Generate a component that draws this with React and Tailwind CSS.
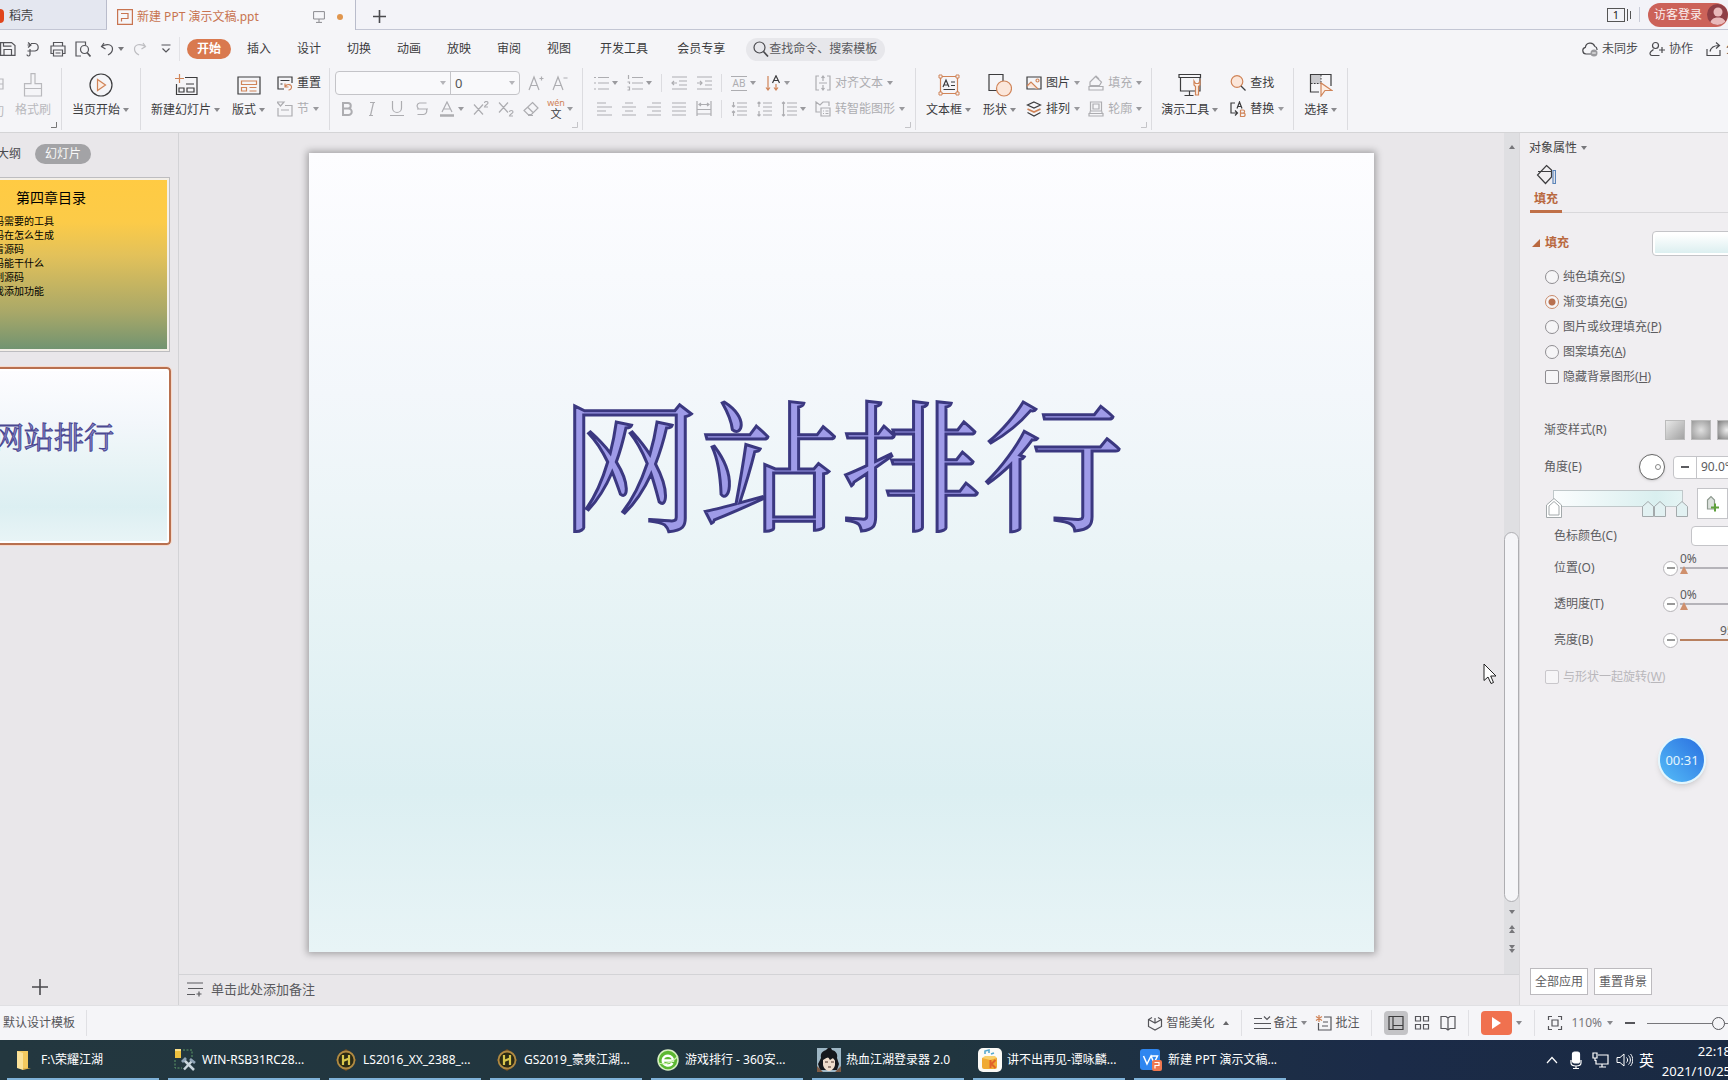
import React from "react";

const Svg = ({ w = 16, h = 16, className = "", children }) => (
  <svg
    width={w}
    height={h}
    viewBox={`0 0 ${w} ${h}`}
    fill="none"
    stroke="currentColor"
    strokeWidth="1.2"
    aria-hidden="true"
    className={`shrink-0 ${className}`}
  >
    {children}
  </svg>
);

const Caret = ({ className = "ml-[3px] text-[#8a8a8e]" }) => (
  <svg width="6" height="4" viewBox="0 0 6 4" aria-hidden="true" className={`shrink-0 ${className}`}>
    <path d="M0 0h6L3 4z" fill="currentColor" />
  </svg>
);

const OR = "#d08458";

const Sep = ({ className = "h-[18px] bg-[#dcdce0]" }) => <span className={`w-px shrink-0 ${className}`} />;

const Group = ({ className = "", launcher, dim, children }) => (
  <div className={`relative flex h-[62px] shrink-0 border-r border-[#dcdce0] pt-[2px] ${className}`}>
    {children}
    {launcher && (
      <Svg w={6} h={6} className={`absolute right-1 bottom-[2px] ${dim ? "text-[#c4c4c8]" : "text-[#777]"}`}>
        <path d="M5.5 0v5.5H0" strokeWidth="1" />
      </Svg>
    )}
  </div>
);

const Big = ({ label, caret, disabled, children }) => (
  <button
    type="button"
    disabled={disabled}
    className={`flex shrink-0 flex-col items-center pt-[3px] ${disabled ? "text-[#b9b9bd]" : "text-[#3c3c3e]"}`}
  >
    <span className="flex h-6 items-center">{children}</span>
    <span className="mt-[3px] flex items-center leading-5">
      {label}
      {caret && <Caret />}
    </span>
  </button>
);

const Tool = ({ label, name, caret, disabled, className = "", children }) => (
  <button
    type="button"
    aria-label={label ? undefined : name}
    disabled={disabled}
    className={`flex h-[26px] shrink-0 items-center whitespace-nowrap ${disabled ? "text-[#adadb1]" : "text-[#3c3c3e]"} ${className}`}
  >
    {children}
    {label && <span className="ml-1">{label}</span>}
    {caret && <Caret className={label ? "ml-1 text-[#9a9a9e]" : "ml-[3px] text-[#9a9a9e]"} />}
  </button>
);

const Lines = ({ d }) => (
  <Svg>
    <path d={d} />
  </Svg>
);

function TitleBar() {
  return (
    <header className="flex h-[30px] shrink-0 items-stretch border-b border-[#c3c6d4] bg-[#f3f3f8] text-[#444]">
      <button type="button" className="flex w-[107px] shrink-0 items-center gap-[5px] border-r border-[#b9bccb] bg-[#e4e7f0] pt-[3px]">
        <span className="h-[14px] w-1 rounded-r-full bg-[#e0451c]" />
        稻壳
      </button>
      <button type="button" className="-mb-px flex w-[249px] shrink-0 items-center border-r border-[#b9bccb] bg-[#f6f6f9] pl-[10px] pt-[3px] text-[#c87450]">
        <Svg w={16} h={16}>
          <path d="M.6 .6h14.800v14.800H.6zM4.500 12.500V9.500h6.500v-5H4" />
        </Svg>
        <span className="ml-1">新建 PPT 演示文稿.ppt</span>
        <Svg w={12} h={12} className="ml-auto text-[#8b8b90]">
          <path d="M.6 .6h10.800v7.400H.6zM6 8v3M3 11.400h6" strokeWidth="1" />
        </Svg>
        <span className="ml-3 mr-3 size-[6px] rounded-full bg-[#e0964e]" />
      </button>
      <button type="button" aria-label="新建标签" className="ml-[17px] flex items-center pt-[3px] text-[#4a4a4e]">
        <Svg w={13} h={13}>
          <path d="M6.500 0v13M0 6.500h13" strokeWidth="1.600" />
        </Svg>
      </button>
      <div className="ml-auto flex items-center">
        <span className="flex items-center gap-[2px]">
          <span className="flex h-[14px] w-[18px] items-center justify-center border border-[#555] text-[11px] leading-3 text-[#222]">1</span>
          <span className="h-3 w-px bg-[#555]" />
          <span className="h-2 w-px bg-[#555]" />
        </span>
        <Sep className="mx-2 h-[15px] bg-[#c9ccd8]" />
        <button type="button" className="flex h-6 items-center rounded-full bg-[#cc6259] pl-[6px] text-[#fbeeee]">
          访客登录
          <span className="ml-[5px] flex size-[21px] items-end justify-center overflow-hidden rounded-full bg-[#8f3f46]">
            <svg width="18" height="20" viewBox="0 0 18 20" aria-hidden="true" fill="#e9b9ba">
              <circle cx="9" cy="7" r="4.500" />
              <path d="M1 20c0-5 3-7.500 8-7.500s8 2.500 8 7.500z" />
            </svg>
          </span>
        </button>
      </div>
    </header>
  );
}

function MenuBar() {
  const tabs = ["插入", "设计", "切换", "动画", "放映", "审阅", "视图"];
  return (
    <nav className="flex h-[38px] shrink-0 items-center text-[#3c3c3e]">
      <div className="flex items-center gap-[9px] text-[#55555a]">
        <Svg w={16} h={16}>
          <path d="M.6 1.600h11l3.400 3v9.800H.6zM3.500 1.600v3.600h8M4 14V8.500h7.500V14" />
        </Svg>
        <Svg w={16} h={16}>
          <path d="M3 1.500 6 4 3 6.500M6 4H2.500M6 2.500h4a3.800 3.800 0 0 1 0 7.500H2.500M5 8v5.500a1.500 1.500 0 0 1-3 0" />
        </Svg>
        <Svg w={16} h={16}>
          <path d="M3.500 5V1.500h9V5M3.500 12.500H1V5h14v7.500h-2.500M3.500 9h9v6h-9zM5.500 12h5" />
        </Svg>
        <Svg w={16} h={16}>
          <path d="M6 15H1V1h9.500v3" />
          <circle cx="9.500" cy="8.500" r="4" />
          <path d="m12 11.500 3.500 4" strokeWidth="1.700" />
        </Svg>
        <span className="flex items-center">
          <Svg w={14} h={14}>
            <path d="M4 1 1.500 4.500 5.500 7M1.500 4.500C7 1 12.500 2.500 12.500 7c0 3-2.500 5-4.500 6" />
          </Svg>
          <Caret className="ml-1 text-[#77777b]" />
        </span>
        <Svg w={14} h={14} className="text-[#bdbdc1]">
          <path d="m10 1 2.500 3.500L8.500 7M12.500 4.500C7 1 1.500 2.500 1.500 7c0 3 2.500 5 4.500 6" />
        </Svg>
        <Svg w={12} h={10} className="ml-1">
          <path d="M1.500 1h9M2.500 4.500 6 8l3.500-3.500" />
        </Svg>
      </div>
      <Sep className="mx-[7px] h-6 bg-[#e2e2e6]" />
      <button type="button" className="h-5 w-11 shrink-0 rounded-full bg-[#d9794f] font-bold text-white">开始</button>
      <div className="ml-4 flex gap-[26px]">
        {tabs.map((t) => (
          <button type="button" key={t}>{t}</button>
        ))}
      </div>
      <button type="button" className="ml-[29px]">开发工具</button>
      <button type="button" className="ml-[29px]">会员专享</button>
      <label className="ml-[21px] flex h-[23px] w-[139px] items-center rounded-full bg-[#e7e7eb] pl-[7px]">
        <Svg w={16} h={16} className="text-[#4a4a4e]">
          <circle cx="6.500" cy="6.500" r="5.500" />
          <path d="m10.500 10.500 4.500 5" strokeWidth="1.700" />
        </Svg>
        <input
          aria-label="搜索"
          placeholder="查找命令、搜索模板"
          className="w-[112px] bg-transparent outline-none placeholder:text-[#5a5a5e] placeholder:opacity-100"
        />
      </label>
      <div className="ml-auto flex w-[146px] shrink-0 items-center overflow-hidden whitespace-nowrap text-[#4a4a4e]">
        <button type="button" className="flex shrink-0 items-center gap-1">
          <Svg w={16} h={16}>
            <path d="M9 13H4a3.400 3.400 0 0 1-.6-6.700 4.800 4.800 0 0 1 9.300-1A3.500 3.500 0 0 1 15 9" />
            <circle cx="12" cy="12" r="3.500" fill="#9a9a9e" stroke="none" />
            <path d="M10.200 12h3.600" stroke="#fff" strokeWidth="1" />
          </Svg>
          未同步
        </button>
        <button type="button" className="ml-[11px] flex shrink-0 items-center gap-1">
          <Svg w={16} h={16}>
            <circle cx="6.500" cy="4.500" r="3" />
            <path d="M4.500 8.500 2 10.500c-2 2-.5 4 1 4h7.500M13 6v6M10 9h6" />
          </Svg>
          协作
        </button>
        <button type="button" className="ml-[13px] flex shrink-0 items-center gap-1">
          <Svg w={16} h={16}>
            <path d="M1 8v6.500h13V9M4 10.500C5 6 8 4.500 13 4.500M10 1.500l3.500 3-3.500 3" />
          </Svg>
          分享
        </button>
      </div>
    </nav>
  );
}

function Ribbon() {
  return (
    <div className="flex h-[65px] shrink-0 items-start overflow-hidden border-b border-[#d4d4d6] whitespace-nowrap">
      <Group launcher className="w-[62px] text-[#b9b9bd]">
        <div className="flex w-[15px] flex-col justify-start gap-[14px] overflow-hidden pt-2">
          <Svg w={4} h={12}>
            <path d="M0 1h3v10H0M0 6h3" />
          </Svg>
          <span className="flex w-1 justify-end overflow-hidden leading-4">切</span>
        </div>
        <Big label="格式刷" disabled>
          <Svg w={20} h={24}>
            <path d="M8 .6h4v10h6.500V23H1.500V10.600H8zM1.500 15.500h17" />
          </Svg>
        </Big>
      </Group>
      <Group className="pl-[10px] pr-[11px]">
        <Big label="当页开始" caret>
          <Svg w={24} h={24}>
            <circle cx="12" cy="12" r="11" />
            <path d="M8.500 6.500v11l8-5.500z" stroke={OR} fill="#fdeee4" />
          </Svg>
        </Big>
      </Group>
      <Group className="gap-3 pl-[10px] pr-2">
        <Big label="新建幻灯片" caret>
          <Svg w={24} h={24}>
            <path d="M11 4.500h12v17H2.500V11M5 15h5v4H5zM13 15h7v4h-7zM12 11h8" />
            <path d="M5.500 1v9M1 5.500h9" stroke={OR} />
          </Svg>
        </Big>
        <Big label="版式" caret>
          <Svg w={24} h={24}>
            <path d="M1 4h22v17H1z" />
            <path d="M4.500 8h15v3.500h-15zM4.500 14.500h5v3.500h-5zM12.500 14.500h7M12.500 18h7" stroke={OR} />
          </Svg>
        </Big>
        <div>
          <Tool label="重置">
            <Svg>
              <path d="M7 14H1V2h14v6M3.500 5.500h9M3.500 9h2" />
              <path d="M8 8.500v3.500h3.500M8.500 11.500c1-3 6.500-2.500 6 1-.3 1.700-1.500 2.500-3 2.500" stroke={OR} />
            </Svg>
          </Tool>
          <Tool label="节" caret disabled>
            <Svg>
              <path d="M1 7v8h14V4.500H8M4 9h8M0 1h7L3.500 5z" />
            </Svg>
          </Tool>
        </div>
      </Group>
      <Group launcher dim className="pl-[5px] pr-[9px]">
        <div>
          <div className="flex h-[26px] items-center">
            <div className="flex h-6 overflow-hidden rounded border border-[#c4c4c8] bg-[#f9f9fb] text-[#555]">
              <div className="relative flex w-[115px] items-center border-r border-[#c4c4c8]">
                <select aria-label="字体" className="h-full w-full appearance-none bg-transparent px-1 outline-none">
                  <option> </option>
                </select>
                <Caret className="absolute right-1 text-[#b5b5b9]" />
              </div>
              <div className="relative flex w-[68px] items-center">
                <select aria-label="字号" className="h-full w-full appearance-none bg-transparent px-1 text-[13px] outline-none">
                  <option>0</option>
                </select>
                <Caret className="absolute right-1 text-[#b5b5b9]" />
              </div>
            </div>
            <Tool name="增大字号" disabled className="ml-2">
              <Lines d="M1 15 6 2l5 13M3 10.500h6M11.500 3.500h4M13.500 1.500v4" />
            </Tool>
            <Tool name="减小字号" disabled className="ml-2">
              <Lines d="M1 15 6 2l5 13M3 10.500h6M11.500 3h4" />
            </Tool>
          </div>
          <div className="flex h-[26px] items-center gap-[9px] pl-1">
            <Tool name="加粗" disabled>
              <Svg>
                <path d="M4 2v12h5.500a3.200 3.200 0 0 0 0-6.500H4h5a2.700 2.700 0 0 0 0-5.500z" strokeWidth="2" />
              </Svg>
            </Tool>
            <Tool name="倾斜" disabled>
              <Lines d="M6 1.500h5M5 14.500h4M9.500 1.500l-3 13" />
            </Tool>
            <Tool name="下划线" disabled>
              <Lines d="M3.500 0v7a4.500 4.500 0 0 0 9 0V0M1 14.500h14" />
            </Tool>
            <Tool name="删除线" disabled>
              <Lines d="M12.500 2H5.500a3 3 0 0 0-1 5.500M3 8h11M12.500 8.500c1 2-.5 5-3 5H3.500" />
            </Tool>
            <Tool name="字体颜色" disabled caret>
              <Svg>
                <path d="M3 11 8 1l5 10M5 8h6" />
                <path d="M1 14.500h14" strokeWidth="2.500" />
              </Svg>
            </Tool>
            <Tool name="上标" disabled>
              <Svg>
                <path d="M1 3.500l9 10M10 3.500l-9 10M11.500 2c0-2 3.500-2 3.500 0 0 1.500-3.500 2-3.500 4H15" />
              </Svg>
            </Tool>
            <Tool name="下标" disabled>
              <Svg>
                <path d="M1 1.500l9 10M10 1.500l-9 10M11.500 11c0-2 3.500-2 3.500 0 0 1.500-3.500 2-3.500 4H15" />
              </Svg>
            </Tool>
            <Tool name="清除格式" disabled>
              <Lines d="M9.500 1.500 15 7l-6.500 6.500H5L1 9.500zM4.500 6l6 6M5 14.500h5" />
            </Tool>
            <Tool name="拼音指南" caret>
              <span className="flex w-4 flex-col items-center">
                <span className="text-[9px] leading-[10px] text-[#d08458]">wén</span>
                <span className="text-[11px] leading-[12px]">文</span>
              </span>
            </Tool>
          </div>
        </div>
      </Group>
      <Group launcher dim className="pl-[10px] pr-[10px]">
        <div>
          <div className="flex h-[26px] items-center gap-[9px]">
            <Tool name="项目符号" disabled caret>
              <Lines d="M5 2.500h11M5 8h11M5 14h11M1 2.500h2M1 8h2M1 14h2" />
            </Tool>
            <Tool name="编号" disabled caret>
              <Lines d="M5 2.500h11M5 8h11M5 14h11M1.500 0v4M.5 7h2v2M.5 12h2v3h-2" />
            </Tool>
            <Sep />
            <Tool name="减少缩进" disabled>
              <Lines d="M1 2h15M8 6h8M8 10h8M1 14h15M6 8H1M3 6 1 8l2 2" />
            </Tool>
            <Tool name="增加缩进" disabled>
              <Lines d="M1 2h15M9 6h7M9 10h7M1 14h15M1 8h5M4 6l2 2-2 2" />
            </Tool>
            <Sep />
            <Tool name="字符间距" disabled caret>
              <span className="flex h-[15px] w-4 items-center justify-center border-y border-current text-[10px] leading-3">AB</span>
            </Tool>
            <Tool name="文字方向" caret>
              <Svg>
                <path d="M3 1v14M1 12.500 3 15l2-2.500M11 9v6M9 12.500l2 2.500 2-2.500" stroke={OR} />
                <path d="M7.500 8 11 .8 14.500 8M9 5.500h4" />
              </Svg>
            </Tool>
          </div>
          <div className="flex h-[26px] items-center gap-[9px] pl-[3px]">
            <Tool name="左对齐" disabled>
              <Lines d="M1 2h9M1 6h15M1 10h9M1 14h15" />
            </Tool>
            <Tool name="居中" disabled>
              <Lines d="M4 2h8M1 6h14M4 10h8M1 14h14" />
            </Tool>
            <Tool name="右对齐" disabled>
              <Lines d="M6 2h9M1 6h14M6 10h9M1 14h14" />
            </Tool>
            <Tool name="两端对齐" disabled>
              <Lines d="M1 2h14M1 6h14M1 10h14M1 14h14" />
            </Tool>
            <Tool name="分散对齐" disabled>
              <Lines d="M1 0v15M15 0v15M3 3.500h10M5 2 3 3.500 5 5M11 2l2 1.500L11 5M1 8.500h14M1 13h14" />
            </Tool>
            <Sep />
            <Tool name="段前间距" disabled>
              <Lines d="M6 2h10M6 6h10M6 10h10M6 14h10M2.500 1v5M1 4.500 2.500 6 4 4.500M2.500 10v5M1 11.500 2.500 10 4 11.500" />
            </Tool>
            <Tool name="段后间距" disabled>
              <Lines d="M7 2h9M7 6h9M7 10h9M7 14h9M3 1v5M1.500 2.500 3 1l1.500 1.500M3 10v5M1.500 13.500 3 15l1.500-1.500" />
            </Tool>
            <Tool name="行距" disabled caret>
              <Lines d="M6 2h10M6 6h10M6 10h10M6 14h10M2.500 1v14M1 2.500 2.500 1 4 2.500M1 13.500 2.500 15 4 13.500" />
            </Tool>
          </div>
        </div>
        <div className="ml-[9px]">
          <Tool label="对齐文本" disabled caret>
            <Lines d="M4 1H1v14h3M12 1h3v14h-3M4 8h8M8 1v5M6.500 3 8 1l1.500 2M8 10v5M6.500 13 8 15l1.500-2" />
          </Tool>
          <Tool label="转智能图形" disabled caret>
            <Lines d="M5 11H1V1l4 3 3-3h6v4M6 7h9v8H6zM8 10h1M10.500 10h3M8 12.500h1M10.500 12.500h3" />
          </Tool>
        </div>
      </Group>
      <Group launcher dim className="pl-[10px] pr-[9px]">
        <Big label="文本框" caret>
          <Svg w={22} h={22}>
            <path d="M2.500 2.500h17v17h-17z" stroke={OR} />
            <path d="M1 1h3v3H1zM18 1h3v3h-3zM1 18h3v3H1zM18 18h3v3h-3z" stroke={OR} fill="#f6f6f9" strokeWidth="1" />
            <path d="M5 13 8 6l3 7M6 11h4M13 8h4M13 11.500h4M5.500 15.500h11.500" />
          </Svg>
        </Big>
        <div className="ml-3">
          <Big label="形状" caret>
            <Svg w={24} h={24}>
              <path d="M1 1.500h14v16H1z" />
              <circle cx="16" cy="15.500" r="7.500" stroke={OR} fill="#fbe6da" />
            </Svg>
          </Big>
        </div>
        <div className="ml-[10px]">
          <Tool label="图片" caret>
            <Svg>
              <path d="M1 2h14v12H1z" />
              <path d="m1 11 4-4 7 7" stroke={OR} fill="#fbe6da" />
              <circle cx="11.500" cy="5.500" r="1.500" stroke={OR} />
            </Svg>
          </Tool>
          <Tool label="排列" caret>
            <Svg>
              <path d="m8 1 6.500 3L8 7 1.500 4z" />
              <path d="M1.500 8 8 11l6.500-3" stroke={OR} strokeWidth="1.800" />
              <path d="M1.500 11.500 8 15l6.500-3.500" />
            </Svg>
          </Tool>
        </div>
        <div className="ml-2">
          <Tool label="填充" caret disabled>
            <Lines d="M7.500 1.500 2 7v3.500h9.500L13.500 7zM5 4l3-3 3 3M1 11.500h14V15H1z" />
          </Tool>
          <Tool label="轮廓" caret disabled>
            <Lines d="M2.500 1h11v9h-11zM5 3h6v5H5zM1 12.500h14V15H1zM2 10.500v2M14 10.500v2" />
          </Tool>
        </div>
      </Group>
      <Group className="gap-3 pl-[9px] pr-[9px]">
        <Big label="演示工具" caret>
          <Svg w={24} h={24}>
            <path d="M1 1.500h21.500v3H1zM2.500 4.500V18h19.500V4.500M11.500 18v4.500M6.500 22.500h9" />
            <path d="M16 8v4l1.500 1.500V22h3v-8.500L22 12V8l-1.500 2.500h-3z" stroke={OR} fill="#fdeee4" />
          </Svg>
        </Big>
        <div>
          <Tool label="查找">
            <Svg>
              <circle cx="7" cy="6.500" r="5.800" stroke={OR} fill="#fbe6da" />
              <path d="m11 11 4.500 4.500" />
            </Svg>
          </Tool>
          <Tool label="替换" caret>
            <Svg>
              <path d="M5 2H1v10h6M5 9.500 7.500 12 5 14.500M7 7.500 9.500 1 12 7.500M8 5.500h3" />
              <path d="M10.500 9v6.500h3a1.500 1.500 0 0 0 0-3.300h-3M13 12.200a1.500 1.500 0 0 0 0-3.200h-2.500" stroke={OR} />
            </Svg>
          </Tool>
        </div>
      </Group>
      <Group className="px-[10px]">
        <Big label="选择" caret>
          <Svg w={24} h={24}>
            <path d="M2 2h10v9H2z" fill="#c9c9cd" stroke="none" />
            <path d="M10 19H1.500V1.500H22V13" />
            <path d="M2 10.500h9.500M12 2v8" strokeDasharray="1.500 1.500" strokeWidth="1" />
            <path d="M12 10v13l4-5.500h7z" stroke={OR} fill="#fdeee4" />
          </Svg>
        </Big>
      </Group>
    </div>
  );
}

const serifTitle = "font-['Noto_Serif_CJK_SC','Noto_Sans_CJK_SC',sans-serif] font-normal";
const slideBg = "bg-[linear-gradient(180deg,#fdfdff_0%,#f3f7fb_30%,#e9f4f6_52%,#dceff2_80%,#e8f4f6_100%)]";

function SlideList() {
  const items = ["码需要的工具", "码在怎么生成", "看源码", "码能干什么", "制源码", "戏添加功能"];
  return (
    <aside className="flex w-[179px] shrink-0 flex-col overflow-hidden border-r border-[#d3d3d6] whitespace-nowrap text-[#4a4a4e]">
      <div className="mt-[11px] flex h-5 items-center gap-[14px]">
        <button type="button" className="flex w-[21px] justify-end">大纲</button>
        <button type="button" className="h-5 w-14 rounded-full bg-[#a3a3a6] text-[#f8f8f8]">幻灯片</button>
      </div>
      <button
        type="button"
        className="mt-[13px] h-[175px] w-[170px] border border-l-0 border-[#bdbdc0] bg-[#f3efe8] py-[2px] pr-[2px] text-left text-black"
      >
        <span className="flex h-full flex-col bg-[linear-gradient(180deg,#ffcb43_0%,#fccb48_25%,#e2c15a_45%,#a9a868_78%,#729471_100%)] pt-2">
          <span className="pl-4 text-[14px] leading-[20px]">第四章目录</span>
          <span className="-ml-[6px] mt-[6px] flex flex-col text-[10px] leading-[14px]">
            {items.map((t) => (
              <span key={t}>{t}</span>
            ))}
          </span>
        </span>
      </button>
      <button
        type="button"
        className="mt-[15px] h-[178px] w-[171px] rounded-r border-2 border-l-0 border-[#b8704f] bg-white py-[2px] pr-[2px] outline outline-1 outline-[#f6d9cb]"
      >
        <span className={`flex h-full justify-start pt-[42px] ${slideBg}`}>
          <span className={`-ml-[6px] text-[30px] leading-[44px] text-[#8e8bd0] [-webkit-text-stroke:1px_#4b4890] ${serifTitle}`}>网站排行</span>
        </span>
      </button>
      <button type="button" aria-label="新建幻灯片" className="mt-auto mb-[10px] ml-8 w-4">
        <Svg>
          <path d="M8 0v16M0 8h16" strokeWidth="1.600" />
        </Svg>
      </button>
    </aside>
  );
}

function Scrollbar() {
  return (
    <div className="flex w-[15px] shrink-0 flex-col items-center bg-[#dfdfe2] pt-3 pb-[21px] text-[#77777b]">
      <Caret className="rotate-180" />
      <div className="mt-[13px] flex w-full flex-1 flex-col justify-end">
        <div className="h-1/2 rounded-full border border-[#aeaeb2] bg-[#f5f5f8]" />
      </div>
      <Caret className="mt-2" />
      <span className="mt-[11px] flex flex-col">
        <Caret className="rotate-180" />
        <Caret className="rotate-180" />
      </span>
      <span className="mt-3 flex flex-col">
        <Caret className="" />
        <Caret className="" />
      </span>
    </div>
  );
}

function Editor() {
  return (
    <main className="flex min-w-0 flex-1 flex-col">
      <div className="flex min-h-0 flex-1">
        <div className="flex min-w-0 flex-1 justify-center overflow-hidden pt-5 pb-[22px]">
          <section className={`flex aspect-[4/3] h-full justify-center pt-[206px] shadow-[0_0_7px_2px_rgba(0,0,0,0.3)] ${slideBg}`}>
            <h1 className={`text-[141px] leading-[200px] whitespace-nowrap text-[#9f9be8] [-webkit-text-stroke:3px_#3b3880] ${serifTitle}`}>
              网站排行
            </h1>
          </section>
        </div>
        <Scrollbar />
      </div>
      <div className="flex h-[31px] shrink-0 items-center border-t border-[#d3d3d6] pb-[2px] pl-2 text-[13px] text-[#5a5a5e]">
        <Svg className="mr-2">
          <path d="M0 2h16M1 7.500h15M0 13.500h8M12 10.500v5M9.500 13h5" />
        </Svg>
        单击此处添加备注
      </div>
    </main>
  );
}

const Option = ({ type, name, label, k, checked, disabled }) => (
  <label className={`flex h-[25px] items-center gap-1 ${disabled ? "text-[#b9b7bb]" : ""}`}>
    <input
      type={type}
      name={name}
      defaultChecked={checked}
      disabled={disabled}
      className={`size-[14px] shrink-0 appearance-none border bg-[#f6f5f7] checked:border-[#c98a6a] checked:bg-[radial-gradient(circle,#b8704f_0_3px,transparent_4px)] ${
        type === "radio" ? "rounded-full" : "rounded-[2px]"
      } ${disabled ? "border-[#c9c7cb]" : "border-[#8f8d91]"}`}
    />
    <span>
      {label}(<u>{k}</u>)
    </span>
  </label>
);

const Stop = ({ big, className = "" }) => (
  <svg width={big ? 16 : 12} height={big ? 20 : 16} viewBox={big ? "0 0 16 20" : "0 0 12 16"} aria-hidden="true" className={className} stroke="#a3a9ab">
    {big ? (
      <path d="M.5 7 8 .5 15.500 7v12.500H.5zM3 8l5-4.500L13 8v9H3z" fill="#fff" />
    ) : (
      <path d="M.5 5.500 6 .5l5.500 5v10H.5z" fill="#e2f1f2" />
    )}
  </svg>
);

const SliderRow = ({ label, value, text, filled }) => (
  <div className="flex h-9 items-center">
    <label htmlFor={label} className="w-[109px] shrink-0">{label}</label>
    <button type="button" aria-label="减少" className="flex size-[15px] shrink-0 items-center justify-center rounded-full border border-[#b5b3b7] bg-white text-[#555]">
      <Svg w={8} h={2}>
        <path d="M0 1h8" />
      </Svg>
    </button>
    <span className="relative ml-[2px] flex w-[106px] shrink-0 items-center">
      <span className={`absolute bottom-[9px] leading-4 ${filled ? "left-10" : "left-0"}`}>{text}</span>
      <input
        id={label}
        type="range"
        defaultValue={value}
        className={`h-4 w-full appearance-none bg-transparent [&::-webkit-slider-runnable-track]:h-[2px] [&::-webkit-slider-thumb]:-mt-px [&::-webkit-slider-thumb]:h-2 [&::-webkit-slider-thumb]:w-2 [&::-webkit-slider-thumb]:appearance-none [&::-webkit-slider-thumb]:bg-[#cf8f6c] [&::-webkit-slider-thumb]:[clip-path:polygon(50%_0,100%_100%,0_100%)] ${
          filled ? "[&::-webkit-slider-runnable-track]:bg-[#b8805f]" : "[&::-webkit-slider-runnable-track]:bg-[#b5b3b9]"
        }`}
      />
    </span>
  </div>
);

function Properties() {
  return (
    <aside className="flex w-[209px] shrink-0 flex-col overflow-hidden border-l border-[#d9d8db] bg-[#f0eef1] whitespace-nowrap text-[#5c5c60]">
      <div className="flex h-[30px] items-center pl-[9px] text-[#444]">
        对象属性
        <Caret className="ml-1 text-[#77777b]" />
      </div>
      <div className="mt-px ml-[10px] w-8">
        <button type="button" className="flex w-8 flex-col items-center border-b-[3px] border-[#c07048] font-bold text-[#b9683f]">
          <Svg w={20} h={22} className="text-[#3c3c3e]">
            <path d="m10.500 1.500 5 4.500v7l-6 6.500L1.500 11zM2 7.500h14" />
            <path d="M17 6.500h2.500v13H17z" stroke="#5b84b8" />
          </Svg>
          <span className="mt-[2px] leading-[22px]">填充</span>
        </button>
      </div>
      <div className="-mt-px ml-[42px] h-px bg-[#d9d8db]" />
      <div className="mt-[18px] flex h-6 shrink-0 items-center pl-3 font-bold text-[#b9683f]">
        <Svg w={8} h={8}>
          <path d="M8 0v8H0z" fill="currentColor" stroke="none" />
        </Svg>
        <span className="ml-[5px]">填充</span>
        <button type="button" aria-label="填充颜色" className="ml-[83px] h-[25px] w-[110px] shrink-0 rounded border border-[#c4c4c8] bg-white p-[2px]">
          <span className="block h-full bg-[linear-gradient(180deg,#fff,#dceff0)]" />
        </button>
      </div>
      <fieldset className="mt-[9px] pl-[25px]">
        <Option type="radio" name="fill" label="纯色填充" k="S" />
        <Option type="radio" name="fill" label="渐变填充" k="G" checked />
        <Option type="radio" name="fill" label="图片或纹理填充" k="P" />
        <Option type="radio" name="fill" label="图案填充" k="A" />
        <Option type="checkbox" label="隐藏背景图形" k="H" />
      </fieldset>
      <div className="mt-[31px] flex h-5 items-center pl-6">
        <span className="w-[121px] shrink-0">渐变样式(R)</span>
        <span className="flex gap-[6px]">
          <button type="button" aria-label="线性" className="size-5 shrink-0 border border-[#bbb] bg-[linear-gradient(135deg,#e8e8e8,#a2a2a2)]" />
          <button type="button" aria-label="射线" className="size-5 shrink-0 border border-[#bbb] bg-[radial-gradient(circle,#e0e0e0,#9a9a9a)]" />
          <button type="button" aria-label="矩形" className="size-5 shrink-0 border border-[#bbb] bg-[radial-gradient(circle,#eee,#7c7c7c)]" />
        </span>
      </div>
      <div className="mt-[14px] flex h-[26px] items-center pl-6">
        <span className="w-[95px] shrink-0">角度(E)</span>
        <span className="flex size-[26px] shrink-0 items-center justify-end rounded-full border border-[#666] bg-white pr-[3px] shadow">
          <span className="size-[6px] rounded-full border border-[#888]" />
        </span>
        <span className="ml-[8px] flex h-[23px] w-[110px] shrink-0 items-center rounded border border-[#c4c4c8] bg-white">
          <button type="button" aria-label="减小角度" className="flex h-full w-[23px] shrink-0 items-center justify-center border-r border-[#c4c4c8]">
            <Svg w={8} h={2}>
              <path d="M0 1h8" strokeWidth="2" />
            </Svg>
          </button>
          <input aria-label="角度" defaultValue="90.0°" className="w-12 bg-transparent pl-1 outline-none" />
        </span>
      </div>
      <div className="mt-2 flex h-[32px] items-start pl-[33px]">
        <div className="relative mt-[2px] h-[17px] w-[130px] shrink-0 border border-[#c0c8ca] bg-[linear-gradient(90deg,#fbfdfe,#d9efef_80%,#e5f4f4)]">
          <Stop big className="absolute -left-2 top-[7px]" />
          <Stop className="absolute left-[88px] top-[10px]" />
          <Stop className="absolute left-[100px] top-[10px]" />
          <Stop className="absolute left-[122px] top-[10px]" />
        </div>
        <button type="button" aria-label="增加渐变光圈" className="ml-[14px] flex size-[31px] shrink-0 items-center justify-center border border-[#c4c4c8] bg-white">
          <Svg w={14} h={18} className="text-[#8f9a90]">
            <path d="M1.500 5 5 1.500 8.500 5v9h-7z" fill="#dde3de" />
            <path d="M9 8.500v8M5 12.500h8" stroke="#5fa03c" strokeWidth="2" />
          </Svg>
        </button>
      </div>
      <div className="pl-[34px]">
        <div className="mt-[6px] flex h-5 items-center">
          <span className="w-[137px] shrink-0">色标颜色(C)</span>
          <button type="button" aria-label="色标颜色" className="h-5 w-20 shrink-0 rounded border border-[#c4c4c8] bg-white" />
        </div>
        <div className="mt-1">
          <SliderRow label="位置(O)" value={0} text="0%" />
          <SliderRow label="透明度(T)" value={0} text="0%" />
          <SliderRow label="亮度(B)" value={95} text="95%" filled />
        </div>
      </div>
      <div className="mt-[6px] pl-[25px]">
        <Option type="checkbox" label="与形状一起旋转" k="W" disabled />
      </div>
      <div className="mt-auto mb-[10px] flex gap-[6px] pl-[10px]">
        <button type="button" className="h-[27px] w-[58px] shrink-0 border border-[#bcbabe] bg-white">全部应用</button>
        <button type="button" className="h-[27px] w-[58px] shrink-0 border border-[#bcbabe] bg-white">重置背景</button>
      </div>
    </aside>
  );
}

function StatusBar() {
  return (
    <footer className="flex h-[35px] shrink-0 items-center border-t border-[#e0e0e3] whitespace-nowrap text-[#55555a]">
      <span className="pl-[3px]">默认设计模板</span>
      <Sep className="ml-[11px] h-[26px] bg-[#e0e0e4]" />
      <div className="ml-auto flex items-center">
        <button type="button" className="flex items-center">
          <Svg>
            <path d="M5 2.500 1.500 4.500v7L8 15l6.500-3.500v-7L11 2.500M1.500 4.500 8 8l6.500-3.500M8 3v4.500" />
          </Svg>
          <span className="ml-[3px]">智能美化</span>
          <Caret className="ml-[9px] rotate-180 text-[#66666a]" />
        </button>
        <Sep className="mx-3 h-[26px] bg-[#e0e0e4]" />
        <button type="button" className="flex items-center">
          <Svg w={17} h={16}>
            <path d="M0 3.500h8M0 8.500h17M0 13.500h17M10 1.500l3 3 3-3" />
          </Svg>
          <span className="ml-[2px]">备注</span>
          <Caret className="ml-1 text-[#88888c]" />
        </button>
        <button type="button" className="ml-2 flex items-center">
          <Svg w={17} h={16}>
            <path d="M9 2h7v13H3.500V8M8 7h5M7 11h6" />
            <path d="M4 0v7M1 1.500l6 4M7 1.500l-6 4" stroke={OR} />
          </Svg>
          <span className="ml-[3px]">批注</span>
        </button>
        <Sep className="mx-3 h-[26px] bg-[#e0e0e4]" />
        <button type="button" aria-label="普通视图" className="flex h-6 w-6 items-center justify-center rounded bg-[#c3c3c6] text-[#3c3c3e]">
          <Svg>
            <path d="M1 1.500h14v13H1zM5 1.500v13M5 10.500h10" />
          </Svg>
        </button>
        <button type="button" aria-label="幻灯片浏览" className="ml-[6px]">
          <Svg>
            <path d="M1.500 1.500h5v4.500h-5zM9.500 1.500h5v4.500h-5zM1.500 9.500h5V14h-5zM9.500 9.500h5V14h-5z" />
          </Svg>
        </button>
        <button type="button" aria-label="阅读视图" className="ml-[10px]">
          <Svg>
            <path d="M8 3 6 1.500H1v12h5l2 1.500 2-1.500h5v-12h-5zM8 3v12" />
          </Svg>
        </button>
        <Sep className="mx-3 h-[26px] bg-[#e0e0e4]" />
        <button type="button" aria-label="播放" className="flex h-6 w-[31px] items-center justify-center rounded bg-[#f0714f]">
          <svg width="9" height="12" viewBox="0 0 9 12" aria-hidden="true">
            <path d="M0 0v12l9-6z" fill="#fff" />
          </svg>
        </button>
        <Caret className="ml-1 text-[#88888c]" />
        <Sep className="mx-[12px] h-[26px] bg-[#e0e0e4]" />
        <button type="button" aria-label="最佳显示比例">
          <Svg>
            <path d="M1.500 5V1.500H5M11 1.500h3.500V5M14.500 11v3.500H11M5 14.500H1.500V11M5 5h6v6H5z" />
          </Svg>
        </button>
        <button type="button" className="ml-2 flex items-center text-[#77777b]">
          110%
          <Caret className="ml-[5px] text-[#88888c]" />
        </button>
        <button type="button" aria-label="缩小" className="ml-3">
          <Svg w={10} h={2}>
            <path d="M0 1h10" strokeWidth="2" />
          </Svg>
        </button>
        <div className="ml-3 w-[81px] overflow-hidden">
          <input
            type="range"
            aria-label="显示比例"
            defaultValue="50"
            className="block h-4 w-[142px] appearance-none bg-transparent [&::-webkit-slider-runnable-track]:h-px [&::-webkit-slider-runnable-track]:bg-[#77777b] [&::-webkit-slider-thumb]:-mt-[6px] [&::-webkit-slider-thumb]:size-[13px] [&::-webkit-slider-thumb]:appearance-none [&::-webkit-slider-thumb]:rounded-full [&::-webkit-slider-thumb]:border [&::-webkit-slider-thumb]:border-[#55555a] [&::-webkit-slider-thumb]:bg-[#f5f5f8]"
          />
        </div>
      </div>
    </footer>
  );
}

const FolderIcon = () => (
  <svg width="24" height="24" viewBox="0 0 24 24" aria-hidden="true">
    <path d="M5 3h11v17H5z" fill="#f3c95f" />
    <path d="M5 3l6 2v17l-6-2z" fill="#fbe29a" />
    <path d="M16 7h3v13h-8v2l8-2V7z" fill="#e6b54b" />
  </svg>
);
const ToolIcon = () => (
  <svg width="24" height="24" viewBox="0 0 24 24" aria-hidden="true" fill="none">
    <path d="M2 1h6v9H2z" fill="#eec13f" />
    <path d="M2 1h6v2H2z" fill="#fbe08a" />
    <path d="M10 2h9v8M2 12v8h7" stroke="#5f9a68" strokeDasharray="2 1.500" />
    <path d="m11 12 10 10M19 13l-8 8.500" stroke="#c8d4dc" strokeWidth="2.500" />
    <path d="m17 11 5 4M9 14l4-4" stroke="#8fa3b5" strokeWidth="2.800" />
  </svg>
);
const MedalIcon = () => (
  <svg width="24" height="24" viewBox="0 0 24 24" aria-hidden="true" fill="none">
    <path d="M12 1l5 3 5 8-5 8-5 3-5-3-5-8 5-8z" fill="#6a4a22" />
    <circle cx="12" cy="12" r="8.500" fill="#2b2a14" stroke="#b08a42" strokeWidth="1.800" />
    <path d="M9 7v10M15 7v10M9 13l6-2.500" stroke="#d8c64c" strokeWidth="2.200" />
  </svg>
);
const BrowserIcon = () => (
  <svg width="24" height="24" viewBox="0 0 24 24" aria-hidden="true" fill="none">
    <circle cx="12" cy="12" r="10" fill="#5cb832" stroke="#d8f0c4" strokeWidth="1.500" />
    <path d="M6.500 12.500h10.500c0-6-9.500-6.500-10.200-.5-.6 6 7.200 7 9.700 3" stroke="#fff" strokeWidth="2.400" />
    <path d="M2 15c6 2 14 0 20-7" stroke="#c9f0a8" strokeWidth="1.200" />
  </svg>
);
const HeroIcon = () => (
  <svg width="24" height="24" viewBox="0 0 24 24" aria-hidden="true">
    <path d="M0 0h24v24H0z" fill="#9db6c4" />
    <path d="M4 10c-1-5 2-7 5-8l2-2h3l1 2c4 1 6 4 5 8l2 6-2 6H3L1 16z" fill="#15171c" />
    <path d="M6 11c2-2 9-2 12 0v6c-1 4-4 6-6 6s-5-2-6-6z" fill="#efdccb" />
    <path d="M6 12l5-3 2 3 3-2 3 4-1-7H6z" fill="#15171c" />
    <path d="M8 14h3M14 14h3M11 19h3" stroke="#4a3028" strokeWidth="1" />
    <path d="M0 18l6 6H0zM24 18l-6 6h6z" fill="#7d5a44" />
  </svg>
);
const MusicIcon = () => (
  <svg width="24" height="24" viewBox="0 0 24 24" aria-hidden="true">
    <rect width="24" height="24" rx="5" fill="#fbfaf6" />
    <path d="M4 10h15v9a2 2 0 0 1-2 2H6a2 2 0 0 1-2-2z" fill="#f0aa34" />
    <path d="M4 10l3-2h10l2 2-7 2z" fill="#f8cf6a" />
    <path d="M12.500 12v8M17.500 12l-4 4 4 4" stroke="#e2622a" strokeWidth="2" fill="none" />
    <path d="M7 6V3l4-1v3M13 6l3-1" stroke="#58a9cf" strokeWidth="1.600" fill="none" />
  </svg>
);
const WpsIcon = () => (
  <svg width="24" height="24" viewBox="0 0 24 24" aria-hidden="true" fill="none">
    <rect x="1" y="1" width="20" height="21" rx="3" fill="#2f86f0" />
    <path d="m4.500 8 3.500 8 4-8 3 7 3.500-7h-7" stroke="#fff" strokeWidth="1.500" />
    <rect x="13" y="12" width="10" height="11" rx="2" fill="#ef7850" />
    <path d="M16 20.500v-3h4v-3h-4.500" stroke="#fff" strokeWidth="1.200" />
  </svg>
);

function Taskbar() {
  const items = [
    [FolderIcon, "F:\\荣耀江湖"],
    [ToolIcon, "WIN-RSB31RC28..."],
    [MedalIcon, "LS2016_XX_2388_..."],
    [MedalIcon, "GS2019_豪爽江湖..."],
    [BrowserIcon, "游戏排行 - 360安..."],
    [HeroIcon, "热血江湖登录器 2.0"],
    [MusicIcon, "讲不出再见-谭咏麟..."],
    [WpsIcon, "新建 PPT 演示文稿..."],
  ];
  return (
    <div className="flex h-10 shrink-0 overflow-hidden bg-[linear-gradient(90deg,#23373f_0%,#20353f_55%,#1b2b48_80%,#1a2a42_100%)] pl-[7px] whitespace-nowrap text-white">
      <div className="flex gap-[9px]">
        {items.map(([Icon, label]) => (
          <button type="button" key={label} className="flex w-[152px] shrink-0 items-center gap-[5px] border-b-2 border-[#7fb2d8] pt-px pl-[5px]">
            <Icon />
            {label}
          </button>
        ))}
      </div>
      <div className="ml-auto flex w-[182px] shrink-0 items-center overflow-hidden">
        <Svg w={12} h={8}>
          <path d="m1 7 5-5.500L11 7" />
        </Svg>
        <Svg w={12} h={18} className="ml-3">
          <rect x="2.500" y="1" width="7" height="11" rx="2" fill="#fff" />
          <path d="M1 9v3c0 4 10 4 10 0V9M6 15v2.500M3 17.500h6" />
        </Svg>
        <Svg w={17} h={16} className="ml-[10px]">
          <path d="M6 3h10v9H4V8M10 12v3M7 15h7M1 1h4v5H1zM3 6v3" />
        </Svg>
        <Svg w={17} h={16} className="ml-[7px]">
          <path d="M1 5.500h3L8 2v12L4 10.500H1zM10.500 5.500c1.500 1.500 1.500 3.500 0 5M12.500 3.500c2.500 2.500 2.500 6.500 0 9M14.500 2c3 3.500 3 8.500 0 12" strokeWidth="1" />
        </Svg>
        <span className="ml-[6px] text-[15px]">英</span>
        <span className="ml-[7px] flex w-[70px] shrink-0 flex-col items-end pt-px text-[13px] leading-5">
          <time>22:18</time>
          <span>2021/10/25</span>
        </span>
      </div>
    </div>
  );
}

export default function App() {
  return (
    <div className="relative flex h-screen w-full flex-col overflow-hidden bg-[#f5f5f8] font-['Noto_Sans','Noto_Sans_CJK_SC',sans-serif] text-[12px] leading-5">
      <TitleBar />
      <MenuBar />
      <Ribbon />
      <div className="flex min-h-0 flex-1 bg-[#e9e7ea]">
        <SlideList />
        <Editor />
        <Properties />
      </div>
      <StatusBar />
      <Taskbar />
      <div className="absolute right-[22px] bottom-[296px] flex size-12 items-center justify-center rounded-full border-2 border-[#e3f6fd] bg-[linear-gradient(45deg,#55bdf8,#2a6fe0)] text-[13px] text-[#e3f6fd] shadow-md">
        00:31
      </div>
      <svg width="14" height="22" viewBox="0 0 14 22" aria-hidden="true" className="absolute right-[231px] bottom-[395px]">
        <path d="M1 1v16.500l4-3.500 3 6.500 2.500-1-2.800-6.500H13z" fill="#fff" stroke="#222" />
      </svg>
    </div>
  );
}
